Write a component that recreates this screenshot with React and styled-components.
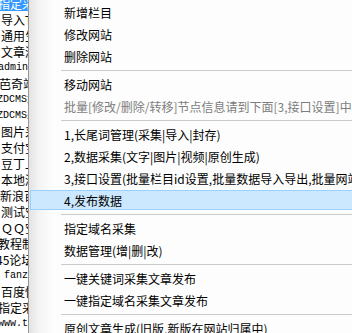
import React from "react";
import styled, { createGlobalStyle } from "styled-components";

const Global = createGlobalStyle`
  html, body { margin: 0; padding: 0; background: #ffffff; overflow: hidden; }
  #root { width: 352px; height: 333px; overflow: hidden; }
`;

const Screen = styled.div`
  display: flex;
  width: 352px;
  height: 333px;
  overflow: hidden;
  background: #ffffff;
`;

const List = styled.div`
  flex: 0 0 28px;
  width: 28px;
  overflow: hidden;
  display: flex;
  flex-direction: column;
  margin-top: -4px;
  background: #ffffff;
`;

const Row = styled.div`
  height: 16px;
  flex: 0 0 16px;
  white-space: nowrap;
  display: flex;
  align-items: center;
  margin-left: ${(p) => p.$shift || 0}px;
`;

const Label = styled.span`
  display: inline-block;
  height: 14px;
  line-height: 14px;
  padding: 0 1px;
  font-family: ${(p) => (p.$mono ? '"Liberation Mono", monospace' : '"Noto Sans CJK SC", "Liberation Sans", sans-serif')};
  font-size: ${(p) => (p.$mono ? "10px" : "12px")};
  color: ${(p) => (p.$selected ? "#ffffff" : "#000000")};
  background: ${(p) => (p.$selected ? "#3399ff" : "transparent")};
`;

const Menu = styled.div`
  flex: 0 0 auto;
  width: 440px;
  height: 333px;
  border-left: 1px solid #979797;
  padding-top: 1px;
  box-sizing: border-box;
  display: flex;
  flex-direction: column;
  background: linear-gradient(to right, #e3e3e3 0px, #f4f4f4 10px, #fdfdfd 24px, #fdfdfd 100%);
`;

const Item = styled.div`
  height: 20px;
  flex: 0 0 20px;
  margin: 1px 0 1px 1px;
  box-sizing: border-box;
  border: 1px solid ${(p) => (p.$active ? "#99d1ff" : "transparent")};
  background: ${(p) => (p.$active ? "#cce8ff" : "transparent")};
  padding-left: 33px;
  display: flex;
  align-items: center;
  white-space: nowrap;
  font-family: "Noto Sans CJK SC", "Liberation Sans", sans-serif;
  font-size: 12px;
  color: ${(p) => (p.$disabled ? "#7d7d7d" : "#000000")};
`;

const Separator = styled.div`
  height: 6px;
  flex: 0 0 6px;
  display: flex;
  align-items: center;
  padding-left: 32px;
  &::after {
    content: "";
    display: block;
    flex: 1;
    height: 1px;
    background: #cbcbcb;
  }
`;

const rows = [
  { t: "指定采集", s: -3, sel: true },
  { t: "导入TXT", s: 0 },
  { t: "通用生成", s: 0 },
  { t: "文章测试", s: 0 },
  { t: "adminSite", s: -3, mono: true },
  { t: "芭奇站群", s: -2 },
  { t: "ZDCMS文章", s: -4, mono: true },
  { t: "ZDCMS采集", s: -4, mono: true },
  { t: "图片采集", s: 0 },
  { t: "支付宝", s: 0 },
  { t: "豆丁上传", s: 0 },
  { t: "本地测试", s: 0 },
  { t: "新浪百科", s: -1 },
  { t: "测试空间", s: 0 },
  { t: "ＱＱ空间", s: 0 },
  { t: "教程制作", s: -3 },
  { t: "45论坛", s: -5 },
  { t: "fanzly", s: 3, mono: true },
  { t: "百度快照", s: 0 },
  { t: "指定采集", s: -3 },
  { t: "www.taobao", s: -3, mono: true },
];

const menu = [
  { t: "新增栏目" },
  { t: "修改网站" },
  { t: "删除网站" },
  { sep: true },
  { t: "移动网站" },
  { t: "批量[修改/删除/转移]节点信息请到下面[3,接口设置]中", disabled: true },
  { sep: true },
  { t: "1,长尾词管理(采集|导入|封存)" },
  { t: "2,数据采集(文字|图片|视频|原创生成)" },
  { t: "3,接口设置(批量栏目id设置,批量数据导入导出,批量网站设置)" },
  { t: "4,发布数据", active: true },
  { sep: true },
  { t: "指定域名采集" },
  { t: "数据管理(增|删|改)" },
  { sep: true },
  { t: "一键关键词采集文章发布" },
  { t: "一键指定域名采集文章发布" },
  { sep: true },
  { t: "原创文章生成(旧版,新版在网站归属中)" },
];

export default function App() {
  return (
    <>
      <Global />
      <Screen>
        <List>
          {rows.map((r, i) => (
            <Row key={i} $shift={r.s}>
              <Label $mono={r.mono} $selected={r.sel}>
                {r.t}
              </Label>
            </Row>
          ))}
        </List>
        <Menu>
          {menu.map((m, i) =>
            m.sep ? (
              <Separator key={i} />
            ) : (
              <Item key={i} $active={m.active} $disabled={m.disabled}>
                {m.t}
              </Item>
            )
          )}
        </Menu>
      </Screen>
    </>
  );
}
